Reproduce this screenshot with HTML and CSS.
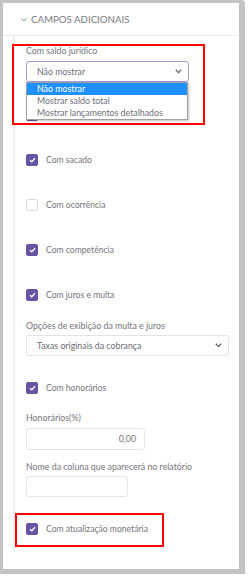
FILE: index.html
```html
<!DOCTYPE html>
<html lang="pt">
<head>
<meta charset="utf-8">
<link rel="stylesheet" href="styles.css">
</head>
<body>
<div class="frame">
  <div class="header">
    <svg class="chev" width="6" height="4" viewBox="0 0 6 4"><path d="M0.5 0.5 L3 3 L5.5 0.5" fill="none" stroke="#888" stroke-width="1"/></svg>
    <span class="title">CAMPOS ADICIONAIS</span>
  </div>
  <div class="content">
    <div class="field-label first">Com saldo jurídico</div>
    <div class="select focus">
      <span>Não mostrar</span>
      <svg class="sel-chev" width="7" height="5" viewBox="0 0 7 5"><path d="M0.8 0.8 L3.5 3.6 L6.2 0.8" fill="none" stroke="#666" stroke-width="1.3"/></svg>
    </div>
    <div class="cb-row gap-a"><span class="cb on"><svg width="7" height="6" viewBox="0 0 7 6"><path d="M1 3.2 L2.8 4.8 L6 1.2" fill="none" stroke="#fff" stroke-width="1.3"/></svg></span></div>
    <div class="cb-row"><span class="cb on"><svg width="7" height="6" viewBox="0 0 7 6"><path d="M1 3.2 L2.8 4.8 L6 1.2" fill="none" stroke="#fff" stroke-width="1.3"/></svg></span><span class="cb-text">Com sacado</span></div>
    <div class="cb-row"><span class="cb"></span><span class="cb-text">Com ocorrência</span></div>
    <div class="cb-row"><span class="cb on"><svg width="7" height="6" viewBox="0 0 7 6"><path d="M1 3.2 L2.8 4.8 L6 1.2" fill="none" stroke="#fff" stroke-width="1.3"/></svg></span><span class="cb-text">Com competência</span></div>
    <div class="cb-row"><span class="cb on"><svg width="7" height="6" viewBox="0 0 7 6"><path d="M1 3.2 L2.8 4.8 L6 1.2" fill="none" stroke="#fff" stroke-width="1.3"/></svg></span><span class="cb-text">Com juros e multa</span></div>
    <div class="field-label l-opcoes">Opções de exibição da multa e juros</div>
    <div class="select wide">
      <span>Taxas originais da cobrança</span>
      <svg class="sel-chev" width="7" height="5" viewBox="0 0 7 5"><path d="M0.8 0.8 L3.5 3.6 L6.2 0.8" fill="none" stroke="#666" stroke-width="1.3"/></svg>
    </div>
    <div class="cb-row gap-b"><span class="cb on"><svg width="7" height="6" viewBox="0 0 7 6"><path d="M1 3.2 L2.8 4.8 L6 1.2" fill="none" stroke="#fff" stroke-width="1.3"/></svg></span><span class="cb-text">Com honorários</span></div>
    <div class="field-label l-hon">Honorários(%)</div>
    <div class="input num">0,00</div>
    <div class="field-label l-nome">Nome da coluna que aparecerá no relatório</div>
    <div class="input name"></div>
    <div class="cb-row gap-b"><span class="cb on"><svg width="7" height="6" viewBox="0 0 7 6"><path d="M1 3.2 L2.8 4.8 L6 1.2" fill="none" stroke="#fff" stroke-width="1.3"/></svg></span><span class="cb-text">Com atualização monetária</span></div>

    <ul class="dropdown">
      <li class="active">Não mostrar</li>
      <li>Mostrar saldo total</li>
      <li>Mostrar lançamentos detalhados</li>
    </ul>
    <div class="mark mark-1"></div>
    <div class="mark mark-2"></div>
  </div>
</div>
</body>
</html>
```

FILE: styles.css
```css
html, body {
  margin: 0;
  padding: 0;
  background: #fff;
}
body {
  font-family: Lato, "Open Sans", sans-serif;
  color: #75747c;
  font-size: 8.8px;
}
.frame {
  width: 245px;
  height: 574px;
  box-sizing: border-box;
  border-style: solid;
  border-color: #c3c3c3;
  border-width: 3px 6px 5px 3px;
  border-top-right-radius: 4px;
  background: #fff;
}
.header {
  height: 33px;
  border-bottom: 1px solid #ececec;
  display: flex;
  align-items: center;
  padding-left: 18px;
  box-sizing: border-box;
}
.chev {
  margin-right: 4px;
  margin-top: 1px;
}
.title {
  font-size: 9.7px;
  color: #7a7a80;
}
.content {
  position: relative;
  margin-left: 10px;
  border-left: 2px solid #efefef;
  padding: 8px 10px 15px 11px;
}
.field-label {
  line-height: 13px;
  height: 13px;
  white-space: nowrap;
}
.select {
  margin-top: 4px;
  height: 21px;
  box-sizing: border-box;
  border: 1px solid #e3e3e3;
  border-radius: 3px;
  display: flex;
  align-items: center;
  justify-content: space-between;
  padding: 0 6px 0 10px;
  color: #6c6b74;
}
.select.focus {
  width: 163px;
  border-color: #a89bd4;
}
.select.wide {
  margin-top: 3px;
}
.cb-row {
  margin-top: 31px;
  height: 14px;
  display: flex;
  align-items: center;
}
.cb-row.gap-a { margin-top: 26px; }
.cb-row.gap-b { margin-top: 25px; }
.cb {
  width: 12px;
  height: 12px;
  box-sizing: border-box;
  border: 1px solid #dcdcdc;
  border-radius: 2px;
  display: flex;
  align-items: center;
  justify-content: center;
  margin-right: 8px;
}
.cb.on {
  background: #6a52a5;
  border-color: #6a52a5;
}
.cb-text {
  line-height: 14px;
  font-size: 8.6px;
}
.l-opcoes { margin-top: 17px; }
.l-hon { margin-top: 16px; }
.l-nome { margin-top: 10px; }
.input {
  box-sizing: border-box;
  border: 1px solid #e6e6e6;
  border-radius: 3px;
  margin-top: 4px;
}
.input.num {
  width: 119px;
  height: 22px;
  text-align: right;
  padding-right: 8px;
  line-height: 20px;
}
.input.name {
  width: 102px;
  height: 21px;
  margin-top: 3px;
}
.dropdown {
  position: absolute;
  left: 11px;
  top: 46px;
  width: 162px;
  margin: 0;
  padding: 0;
  list-style: none;
  background: #fff;
  border: 1px solid #a0a0a0;
  box-sizing: border-box;
  box-shadow: 1px 1px 2px rgba(0,0,0,0.25);
}
.dropdown li {
  height: 12px;
  line-height: 12px;
  padding-left: 10px;
  color: #6f6e78;
  white-space: nowrap;
}
.dropdown li.active {
  background: #1e90ff;
  color: #fff;
}
.mark {
  position: absolute;
  border: 2px solid #ff0000;
  box-sizing: border-box;
}
.mark-1 {
  left: -3px;
  top: 8px;
  width: 193px;
  height: 81px;
}
.mark-2 {
  left: 0px;
  top: 477px;
  width: 149px;
  height: 34px;
}
```
